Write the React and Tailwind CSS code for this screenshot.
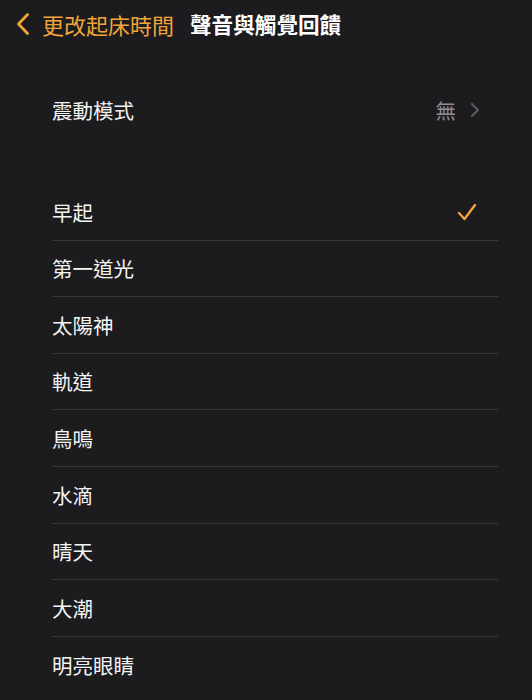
import React from "react";

const items = ["早起", "第一道光", "太陽神", "軌道", "鳥鳴", "水滴", "晴天", "大潮", "明亮眼睛"];

export default function App() {
  return (
    <div
      className="w-[532px] h-[700px] overflow-hidden bg-[#1c1c1e] text-[#f4f4f4]"
      style={{ fontFamily: '"Noto Sans CJK TC", "Noto Sans", sans-serif' }}
    >
      <div className="h-[48px] flex items-center pl-[16px]">
        <svg width="14" height="24" viewBox="0 0 14 24" className="mr-[12px]">
          <path d="M11.5 2.5 L2.5 12 L11.5 21.5" fill="none" stroke="#f2a33a" strokeWidth="2.8" strokeLinecap="round" strokeLinejoin="round" />
        </svg>
        <span className="text-[22px] leading-none text-[#f2a33a]">更改起床時間</span>
        <span className="ml-[16px] text-[21.6px] leading-none font-bold text-white">聲音與觸覺回饋</span>
      </div>
      <div className="mt-[34px] h-[56px] flex items-center pl-[52px] pr-[52px]">
        <span className="text-[20.5px] leading-none">震動模式</span>
        <span className="ml-auto text-[20.5px] leading-none text-[#8e8e93]">無</span>
        <svg width="10" height="16" viewBox="0 0 10 16" className="ml-[14px]">
          <path d="M2 2 L8 8 L2 14" fill="none" stroke="#5a5a5e" strokeWidth="2.2" strokeLinecap="round" strokeLinejoin="round" />
        </svg>
      </div>
      <div className="mt-[46px] pl-[52px] pr-[34px]">
        {items.map((t, i) => (
          <div
            key={t}
            className={
              "h-[56.6px] flex items-center " +
              (i < items.length - 1 ? "border-b border-[#38383b]" : "")
            }
          >
            <span className="text-[20.5px] leading-none">{t}</span>
            {i === 0 && (
              <svg width="22" height="20" viewBox="0 0 22 20" className="ml-auto mr-[20px]">
                <path d="M3 11 L8.5 17 L19 3" fill="none" stroke="#f2a33a" strokeWidth="2.4" strokeLinecap="round" strokeLinejoin="round" />
              </svg>
            )}
          </div>
        ))}
      </div>
    </div>
  );
}
